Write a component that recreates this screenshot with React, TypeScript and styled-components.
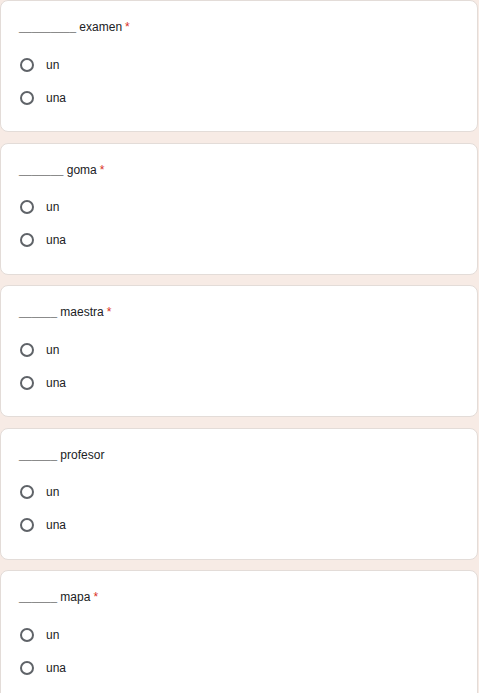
import React from "react";
import styled, { createGlobalStyle } from "styled-components";

const Global = createGlobalStyle`
  html, body { margin: 0; padding: 0; background: #f7ebe5; }
  body { font-family: "Liberation Sans", Arial, sans-serif; }
`;

const Page = styled.div`
  display: flex;
  flex-direction: column;
  gap: 10.5px;
  padding: 0 1px 0 0;
`;

const Card = styled.div`
  background: #fff;
  border: 1px solid #e3dcd8;
  border-radius: 8px;
  padding: 18px 18px 17px 18px;
  height: 132px;
  box-sizing: border-box;
`;

const Title = styled.div`
  font-size: 12px;
  line-height: 16px;
  color: #202124;
`;

const Blank = styled.span`
  color: #6b6b6b;
  font-size: 11.4px;
`;

const Req = styled.span`
  color: #d93025;
  margin-left: 3px;
`;

const Options = styled.div`
  display: flex;
  flex-direction: column;
  margin-top: 13px;
`;

const Option = styled.label`
  display: flex;
  align-items: center;
  height: 33px;
  gap: 12px;
  font-size: 12px;
  color: #202124;
`;

const Radio = styled.span`
  width: 14px;
  height: 14px;
  box-sizing: border-box;
  border: 2px solid #5f6368;
  border-radius: 50%;
  flex: none;
  margin-left: 1px;
`;

const questions = [
  { blank: "_________", word: "examen", required: true },
  { blank: "_______", word: "goma", required: true },
  { blank: "______", word: "maestra", required: true },
  { blank: "______", word: "profesor", required: false },
  { blank: "______", word: "mapa", required: true },
];

export default function App() {
  return (
    <>
      <Global />
      <Page>
        {questions.map((q, i) => (
          <Card key={i}>
            <Title>
              <Blank>{q.blank}</Blank> {q.word}
              {q.required && <Req>*</Req>}
            </Title>
            <Options>
              <Option>
                <Radio />
                un
              </Option>
              <Option>
                <Radio />
                una
              </Option>
            </Options>
          </Card>
        ))}
      </Page>
    </>
  );
}
